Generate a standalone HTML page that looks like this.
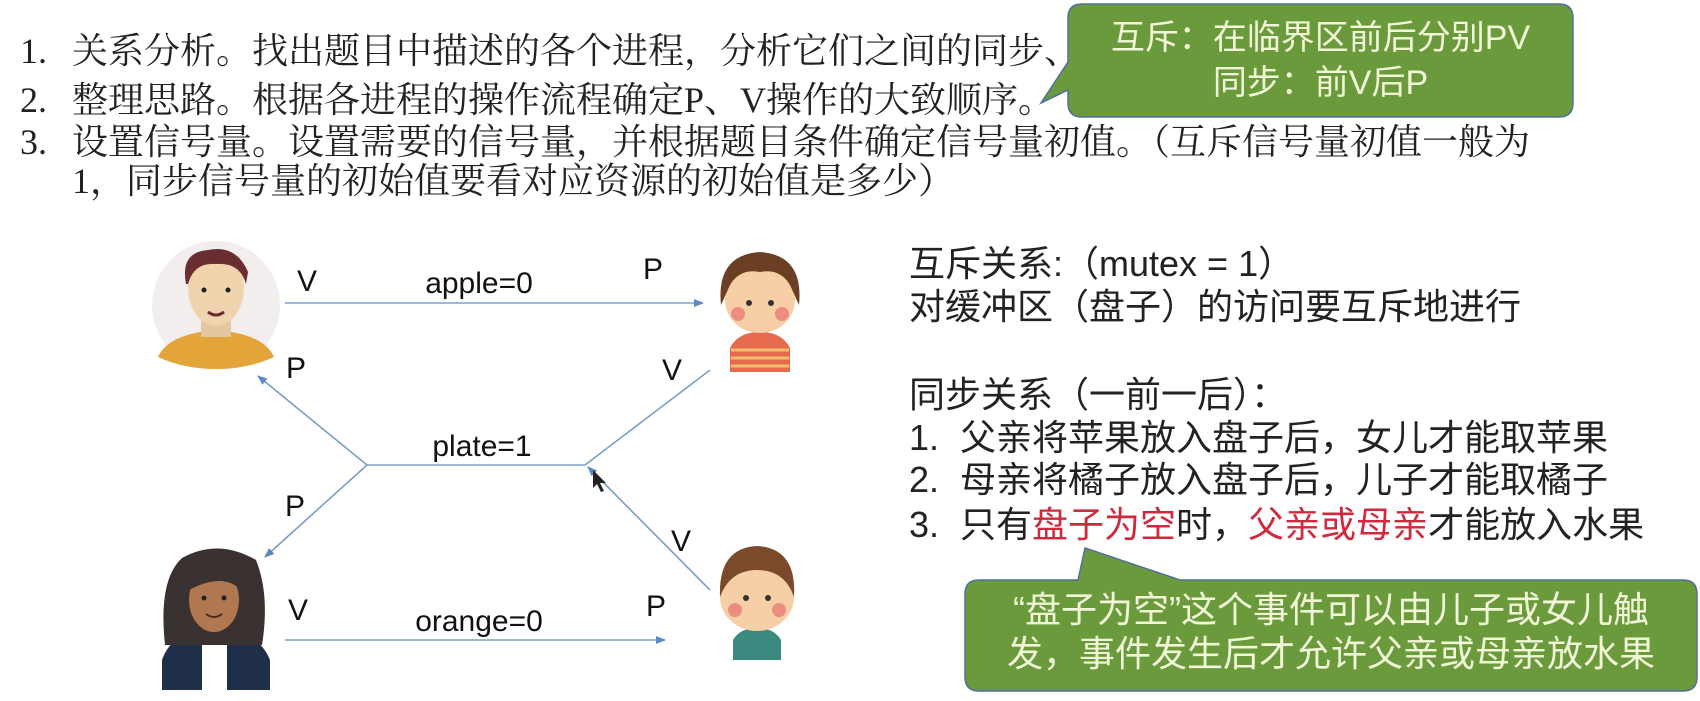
<!DOCTYPE html>
<html><head><meta charset="utf-8"><style>
body{margin:0;width:1700px;height:701px;background:#fff;position:relative;overflow:hidden;font-family:"Liberation Sans","Noto Sans CJK SC",sans-serif;color:#111}
.t{position:absolute;white-space:nowrap;line-height:40px}
.s{font-family:"Liberation Serif","Noto Serif CJK SC",serif;font-size:36px;color:#222}
.r{font-size:36px;color:#222}
.red{color:#d0283c}
.g{color:#f0f8d8;text-align:center;position:absolute;white-space:nowrap}
.n{position:absolute;left:0}
</style></head><body>
<div class="t s" style="left:20px;top:31px">1.<span style="position:absolute;left:52px">关系分析。找出题目中描述的各个进程，分析它们之间的同步、</span></div>
<div class="t s" style="left:20px;top:80px">2.<span style="position:absolute;left:52px">整理思路。根据各进程的操作流程确定P、V操作的大致顺序。</span></div>
<div class="t s" style="left:20px;top:122px">3.<span style="position:absolute;left:52px">设置信号量。设置需要的信号量，并根据题目条件确定信号量初值。（互斥信号量初值一般为</span></div>
<div class="t s" style="left:72px;top:161px">1，同步信号量的初始值要看对应资源的初始值是多少）</div>

<svg width="1700" height="701" style="position:absolute;left:0;top:0">
<path d="M1082 4 H1559 Q1573 4 1573 18 V103 Q1573 117 1559 117 H1082 Q1068 117 1068 103 V90 L1041 103 L1068 62 V18 Q1068 4 1082 4Z" fill="#6b9a3c" stroke="#4f6fa0" stroke-width="1.5"/>
<path d="M979 580 H1078 L1085 548 L1180 580 H1683 Q1697 580 1697 594 V677 Q1697 691 1683 691 H979 Q965 691 965 677 V594 Q965 580 979 580Z" fill="#6b9a3c" stroke="#4f6fa0" stroke-width="1.5"/>
<defs><marker id="a" markerWidth="10" markerHeight="8" refX="9" refY="4" orient="auto" markerUnits="userSpaceOnUse"><path d="M0 0 L10 4 L0 8Z" fill="#5b8ac4"/></marker></defs>
<g stroke="#7b9dc9" stroke-width="1.6" fill="none">
<line x1="285" y1="303" x2="703" y2="303" marker-end="url(#a)"/>
<line x1="367" y1="465" x2="585" y2="465"/>
<line x1="367" y1="465" x2="258" y2="376" marker-end="url(#a)"/>
<line x1="367" y1="465" x2="265" y2="557" marker-end="url(#a)"/>
<line x1="585" y1="465" x2="710" y2="370"/>
<line x1="710" y1="590" x2="588" y2="467" marker-end="url(#a)"/>
<line x1="285" y1="640" x2="665" y2="640" marker-end="url(#a)"/>
</g>
<path d="M593 470 l0 18 l4 -4 l4 8 l3 -1 l-4 -8 l6 0z" fill="#222"/>
<g font-family="Liberation Sans, sans-serif" font-size="30" fill="#111" text-anchor="middle">
<text x="307" y="291">V</text><text x="479" y="293">apple=0</text><text x="653" y="279">P</text>
<text x="296" y="378">P</text><text x="672" y="380">V</text><text x="482" y="456">plate=1</text>
<text x="295" y="516">P</text><text x="681" y="551">V</text><text x="298" y="620">V</text>
<text x="479" y="631">orange=0</text><text x="656" y="616">P</text>
</g>
<!-- father -->
<g transform="translate(8,22)">
<circle cx="208" cy="283" r="64" fill="#f3eeee"/>
<path d="M150 335 Q160 312 208 308 Q256 312 266 335 Q240 347 208 347 Q176 347 150 335Z" fill="#e3a43a"/>
<rect x="193" y="290" width="30" height="25" fill="#e3c6a0"/>
<ellipse cx="208" cy="266" rx="28" ry="38" fill="#f0d4ae"/>
<path d="M178 262 Q172 230 200 228 Q228 222 240 250 L238 262 Q232 240 208 242 Q186 240 180 262Z" fill="#6a2e30"/>
<circle cx="196" cy="268" r="2.5" fill="#222"/><circle cx="220" cy="268" r="2.5" fill="#222"/>
<path d="M200 290 Q208 296 216 290" stroke="#6a2e30" stroke-width="3" fill="none"/>
</g>
<!-- daughter -->
<path d="M730 372 V348 Q738 332 760 332 Q782 332 790 348 V372Z" fill="#e66a4d"/>
<path d="M731 350 H789 M731 358 H789 M731 366 H789" stroke="#f0c070" stroke-width="3"/>
<ellipse cx="760" cy="300" rx="35" ry="33" fill="#f6cfa6"/>
<path d="M721 305 Q716 255 760 252 Q804 255 799 305 L790 285 Q780 268 760 272 Q740 268 730 285Z" fill="#6b3f24"/>
<circle cx="749" cy="303" r="3" fill="#333"/><circle cx="771" cy="303" r="3" fill="#333"/>
<circle cx="738" cy="314" r="7" fill="#ec8d80"/><circle cx="782" cy="314" r="7" fill="#ec8d80"/>
<!-- mother -->
<path d="M162 690 V660 Q172 630 215 628 Q258 630 270 660 V690Z" fill="#1f2f4a"/>
<rect x="202" y="640" width="25" height="50" fill="#fff"/>
<path d="M165 645 Q158 580 182 558 Q218 538 256 560 Q270 595 262 645Z" fill="#3a3230"/>
<ellipse cx="214" cy="600" rx="25" ry="32" fill="#b07850"/>
<path d="M189 590 Q193 560 215 562 Q239 562 241 590 Q223 572 189 590Z" fill="#3a3230"/>
<circle cx="204" cy="598" r="2.5" fill="#222"/><circle cx="224" cy="598" r="2.5" fill="#222"/>
<path d="M206 614 Q214 620 222 614" stroke="#4a2a1a" stroke-width="2" fill="none"/>
<!-- son -->
<path d="M733 660 V640 Q740 628 757 628 Q774 628 781 640 V660Z" fill="#3b8a80"/>
<ellipse cx="757" cy="597" rx="37" ry="34" fill="#f6cfa6"/>
<path d="M720 597 Q718 548 757 546 Q797 548 794 597 Q785 570 757 570 Q730 570 720 597Z" fill="#7a4a2a"/>
<circle cx="746" cy="598" r="3" fill="#333"/><circle cx="768" cy="598" r="3" fill="#333"/>
<circle cx="735" cy="610" r="7" fill="#ec8d80"/><circle cx="779" cy="610" r="7" fill="#ec8d80"/>
</svg>

<div class="g" style="left:1068px;top:16px;width:505px;line-height:45px;font-size:34px">互斥：在临界区前后分别PV<br>同步：前V后P</div>
<div class="g" style="left:965px;top:588px;width:732px;line-height:44px;font-size:36px">“盘子为空”这个事件可以由儿子或女儿触<br>发，事件发生后才允许父亲或母亲放水果</div>

<div class="t r" style="left:909px;top:244px">互斥关系:（mutex = 1）</div>
<div class="t r" style="left:909px;top:287px">对缓冲区（盘子）的访问要互斥地进行</div>
<div class="t r" style="left:909px;top:375px">同步关系（一前一后）：</div>
<div class="t r" style="left:909px;top:418px">1.<span style="position:absolute;left:51px">父亲将苹果放入盘子后，女儿才能取苹果</span></div>
<div class="t r" style="left:909px;top:460px">2.<span style="position:absolute;left:51px">母亲将橘子放入盘子后，儿子才能取橘子</span></div>
<div class="t r" style="left:909px;top:505px">3.<span style="position:absolute;left:51px">只有<span class="red">盘子为空</span>时，<span class="red">父亲或母亲</span>才能放入水果</span></div>
</body></html>
